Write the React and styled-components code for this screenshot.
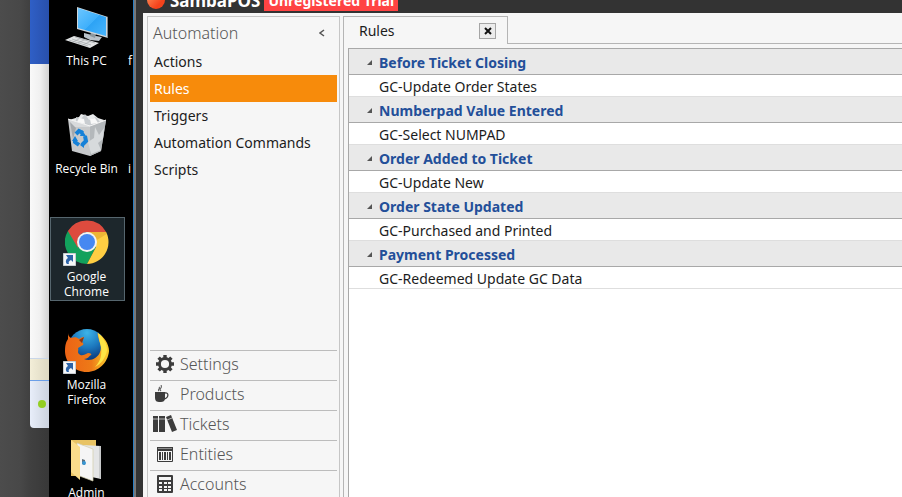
import React, { useState } from "react";
import styled, { createGlobalStyle } from "styled-components";

const menuItems = ["Actions", "Rules", "Triggers", "Automation Commands", "Scripts"];

const ruleGroups = [
  { name: "Before Ticket Closing", rules: ["GC-Update Order States"] },
  { name: "Numberpad Value Entered", rules: ["GC-Select NUMPAD"] },
  { name: "Order Added to Ticket", rules: ["GC-Update New"] },
  { name: "Order State Updated", rules: ["GC-Purchased and Printed"] },
  { name: "Payment Processed", rules: ["GC-Redeemed Update GC Data"] },
];

const ComputerIcon = () => (
  <svg width="44" height="44" viewBox="0 0 44 44">
    <defs>
      <linearGradient id="screen" x1="0" y1="0" x2="1" y2="1">
        <stop offset="0" stopColor="#6cc6ff" />
        <stop offset="0.5" stopColor="#3fb0fb" />
        <stop offset="0.52" stopColor="#2da3f5" />
        <stop offset="1" stopColor="#48b5fc" />
      </linearGradient>
    </defs>
    <path d="M19 29l12 3 6 1-3 4-9-1-6-3z" fill="#b9c2c9" />
    <path d="M26 28l5 2-1 4-5-2z" fill="#8d989f" />
    <path d="M12 3l31 10v21L12 25z" fill="#cfd6da" />
    <path d="M13 4l28 9v19L13 24z" fill="url(#screen)" />
    <path d="M42 13l1 0v21l-1 0z" fill="#7b858b" />
    <path d="M0 36l9-4 25 7-9 5z" fill="#e2e4e5" />
    <path d="M4 36l19 6M7 35l19 6M10 33l20 6M8 38l8-4M13 39l8-4M18 41l8-4" stroke="#9ba0a3" strokeWidth="0.6" />
  </svg>
);

const RecycleIcon = () => (
  <svg width="44" height="46" viewBox="0 0 44 46">
    <path d="M4 8l10-3 2-3 7 2 5-2 5 4 6 2-2 7H7z" fill="#e9ebec" />
    <path d="M11 5l5 2 4-5 4 6 7-3 4 5-8 4-16-3z" fill="#c8ccd0" />
    <path d="M14 6l5 1 1 5-8-2zM25 7l5-1 3 5-7 1z" fill="#f8f8f8" />
    <path d="M3 7l4 32 18 5 11-5 5-31-16 6z" fill="#d6d8da" fillOpacity="0.93" />
    <path d="M25 14L41 8l-5 31-11 5z" fill="#b4b8bb" />
    <path d="M30 15l4 8 5-7-1 11-5 4 3 7-10 4-3-12 6-4z" fill="#d7dadc" />
    <path d="M5 10l6 6-3 11z" fill="#a4a8ac" />
    <path d="M3 7l22 7 16-6" fill="none" stroke="#f4f4f4" />
    <g fill="none" stroke="#1681d8" strokeWidth="4">
      <path d="M11 22l3-3 4 2" />
      <path d="M20 24l1 5-4 4" />
      <path d="M14 33l-4-3v-3" />
    </g>
    <path d="M17 18l4 6-6 0zM19 36l-4-3 4-4zM7 29l3-5 3 5z" fill="#1681d8" />
  </svg>
);

const ChromeIcon = () => (
  <svg width="44" height="44" viewBox="0 0 44 44">
    <path d="M2.900 11A22 22 0 0 0 22 44l9-17-9-5z" fill="#12a15c" />
    <path d="M22 12h19.100A22 22 0 0 1 22 44l9-17z" fill="#ffce43" />
    <path d="M2.900 11A22 22 0 0 1 41.100 12H22c-5 0-9 4-9.500 9L13 28z" fill="#dd4b3e" />
    <path d="M24 12h17l.8 2-10 6z" fill="#d99a28" opacity="0.45" />
    <circle cx="22" cy="22" r="10" fill="#f3f3f3" />
    <circle cx="22" cy="22" r="8" fill="#4688f1" />
  </svg>
);

const FirefoxIcon = () => (
  <svg width="44" height="44" viewBox="0 0 44 44">
    <defs>
      <radialGradient id="globe" cx="0.5" cy="0.1" r="0.8">
        <stop offset="0" stopColor="#3db4e8" />
        <stop offset="0.5" stopColor="#1c77bd" />
        <stop offset="1" stopColor="#0a2a6b" />
      </radialGradient>
      <linearGradient id="fox" x1="0" y1="0" x2="1" y2="0">
        <stop offset="0" stopColor="#ec6315" />
        <stop offset="0.6" stopColor="#ee7a17" />
        <stop offset="1" stopColor="#fbd02f" />
      </linearGradient>
    </defs>
    <circle cx="22" cy="20" r="19" fill="url(#globe)" />
    <path
      d="M3 5c0 2 1 4 3 5 3-1 6-1 8 1 3-2 4-2 5-2l-2 5c1 1 2 2 1 3l-5 3c1 2-1 4 1 6 3 3 6 0 9-1 3 0 4 1 3 2-2 1-3 4-7 4 6 3 14-1 16-7 2-5 0-9-1-12-1-3-1-6-2-7 7 3 12 11 12 18-1 12-11 21-22 21C9 44 0 34 0 23c0-6 1-9 3-12z"
      fill="url(#fox)"
    />
    <path d="M33 5c5 4 9 10 9 17-1 8-6 14-12 17 6-6 7-13 6-20-1-4-2-8-3-14z" fill="#fee545" />
    <path d="M14 12l5-3-2 6z" fill="#8e3512" />
  </svg>
);

const FolderIcon = () => (
  <svg width="44" height="46" viewBox="0 -2 44 46">
    <path d="M6 2h25v36H6z" fill="#e8c364" />
    <path d="M18 7l18 1v33l-14-3z" fill="#e4e5e6" />
    <path d="M34 8l2 0v32l-2 0z" fill="#c7c9ca" />
    <path d="M12 5l16 6v32l-16-6z" fill="#f5f5f5" stroke="#d2cda9" strokeWidth="0.7" />
    <path d="M6 2l9 7v33l-9-8z" fill="#fbdd8b" />
    <path d="M17 21l3 1v5l-3-1z" fill="#5d6d79" />
    <circle cx="19" cy="25" r="2" fill="#3996d3" />
  </svg>
);

const ShortcutArrow = () => (
  <svg width="13" height="13" viewBox="0 0 13 13">
    <path d="M0 0h13v13H0z" fill="#f5f6f7" stroke="#9aa3aa" />
    <path d="M3 2h7v7L8 7c-2 1-3 2-2 4H4c-2-2-1-5 1-6z" fill="#2c63a8" />
  </svg>
);

const SettingsIcon = () => (
  <svg width="18" height="18" viewBox="0 0 18 18" stroke="#3c3c3c" fill="none">
    <circle cx="9" cy="9" r="5.500" strokeWidth="2.800" />
    <path
      d="M9 0v3M9 15v3M0 9h3M15 9h3M2.600 2.600l2.200 2.200M13.200 13.200l2.200 2.200M2.600 15.400l2.200-2.200M13.200 4.800l2.200-2.200"
      strokeWidth="3.400"
    />
  </svg>
);

const ProductsIcon = () => (
  <svg width="24" height="18" viewBox="0 0 24 18">
    <path d="M2 7h10v6c0 3-2 4-4 4H6c-2 0-4-1-4-4z" fill="#3c3c3c" />
    <path d="M12 8c4-1 4 5-1 6" fill="none" stroke="#3c3c3c" strokeWidth="1.300" />
    <path d="M6 6c-2-2 2-2 0-4M8 6c-3-3 2-2 0-6" fill="none" stroke="#666" strokeWidth="1.100" />
  </svg>
);

const TicketsIcon = () => (
  <svg width="24" height="18" viewBox="0 0 24 18">
    <path d="M0 1h5v16H0zM6 1h6v16H6zM13 2l5-2 6 15-5 2z" fill="#3c3c3c" />
    <path d="M0 4h5M6 4h6M14 5l5-2" stroke="#b5b5b5" strokeWidth="1" />
  </svg>
);

const EntitiesIcon = () => (
  <svg width="18" height="18" viewBox="0 0 18 18">
    <path d="M1.500 2.500h15v14h-15z" fill="#f5f5f5" stroke="#3c3c3c" />
    <path d="M1 2h16v4H1z" fill="#3c3c3c" />
    <path d="M2 3.500h14" stroke="#8a8a8a" />
    <path d="M3 7h2v8H3zM6 7h1v8H6zM8 7h2v8H8zM11 7h1v8h-1zM13 7h2v8h-2z" fill="#3c3c3c" />
  </svg>
);

const AccountsIcon = () => (
  <svg width="18" height="18" viewBox="0 0 18 18">
    <rect x="1" y="0" width="16" height="18" rx="1" fill="#3c3c3c" />
    <path d="M3 2h12v3H3z" fill="#f5f5f5" />
    <path d="M3 8h3M8 8h3M12 8h3M3 12h3M8 12h3M12 12h3M3 15h3M8 15h3M12 15h3" stroke="#f5f5f5" strokeWidth="2" />
  </svg>
);

const modules = [
  { name: "Settings", icon: <SettingsIcon /> },
  { name: "Products", icon: <ProductsIcon /> },
  { name: "Tickets", icon: <TicketsIcon /> },
  { name: "Entities", icon: <EntitiesIcon /> },
  { name: "Accounts", icon: <AccountsIcon /> },
];

const shortcuts = [
  { name: "This PC", icon: <ComputerIcon /> },
  { name: "Recycle Bin", icon: <RecycleIcon /> },
  { name: "Google Chrome", icon: <ChromeIcon />, linked: true, selected: true },
  { name: "Mozilla Firefox", icon: <FirefoxIcon />, linked: true },
  { name: "Admin", icon: <FolderIcon /> },
];

export default function App() {
  const [active, setActive] = useState("Rules");
  const [closed, setClosed] = useState([]);

  const toggle = (name) =>
    setClosed(closed.includes(name) ? closed.filter((n) => n !== name) : [...closed, name]);

  return (
    <>
      <GlobalStyle />
      <Screen>
        <Backdrop>
          <BackWindow>
            <BackTitle />
            <BackBody />
            <BackNotice />
            <BackStatus>
              <OnlineDot />
            </BackStatus>
          </BackWindow>
        </Backdrop>

        <Desktop>
          <IconColumn>
            {shortcuts.map((s) => (
              <Shortcut key={s.name} $selected={s.selected}>
                <Picture>
                  {s.icon}
                  {s.linked && (
                    <LinkBadge>
                      <ShortcutArrow />
                    </LinkBadge>
                  )}
                </Picture>
                {s.name}
              </Shortcut>
            ))}
          </IconColumn>
          <ClippedColumn>
            <ClippedLabel>f</ClippedLabel>
            <ClippedLabel>i</ClippedLabel>
          </ClippedColumn>
        </Desktop>

        <Window>
          <TitleBar>
            <Logo />
            <Brand>SambaPOS</Brand>
            <Trial>Unregistered Trial</Trial>
          </TitleBar>
          <Workspace>
            <Sidebar>
              <SidebarHead>
                <h2>Automation</h2>
                <CollapseButton aria-label="Collapse">
                  <svg width="6" height="8" viewBox="0 0 6 8">
                    <path d="M5 1L1 4l4 3" fill="none" stroke="#555" strokeWidth="1.500" />
                  </svg>
                </CollapseButton>
              </SidebarHead>
              <Menu>
                {menuItems.map((item) => (
                  <MenuItem key={item} $active={item === active} onClick={() => setActive(item)}>
                    {item}
                  </MenuItem>
                ))}
              </Menu>
              <Modules>
                {modules.map((m) => (
                  <ModuleButton key={m.name}>
                    <ModuleIcon>{m.icon}</ModuleIcon>
                    {m.name}
                  </ModuleButton>
                ))}
              </Modules>
            </Sidebar>

            <Content>
              <TabStrip>
                <Tab>
                  Rules
                  <CloseButton aria-label="Close tab">
                    <svg width="8" height="8" viewBox="0 0 8 8">
                      <path d="M1 1l6 6M7 1L1 7" stroke="#111" strokeWidth="2" />
                    </svg>
                  </CloseButton>
                </Tab>
                <TabRest />
              </TabStrip>
              <Page>
                <RuleList>
                  {ruleGroups.map((group) => (
                    <section key={group.name}>
                      <GroupHead onClick={() => toggle(group.name)}>
                        <svg width="5" height="5" viewBox="0 0 6 6">
                          <path d="M6 0v6H0z" fill="#555" />
                        </svg>
                        {group.name}
                      </GroupHead>
                      {!closed.includes(group.name) &&
                        group.rules.map((rule) => <Rule key={rule}>{rule}</Rule>)}
                    </section>
                  ))}
                </RuleList>
              </Page>
            </Content>
          </Workspace>
        </Window>
      </Screen>
    </>
  );
}

const GlobalStyle = createGlobalStyle`
  * {
    box-sizing: border-box;
  }
  body {
    margin: 0;
    overflow: hidden;
    font-family: "Noto Sans", "Open Sans", sans-serif;
    font-size: 14px;
    color: #1c1c1c;
  }
  button {
    font: inherit;
    color: inherit;
    border: 0;
    padding: 0;
    background: none;
    text-align: left;
  }
  svg {
    display: block;
    flex-shrink: 0;
  }
`;

const Screen = styled.div`
  display: grid;
  grid-template-columns: 49px 84px 1fr;
  height: 100vh;
  overflow: hidden;
`;

const Backdrop = styled.div`
  padding-left: 30px;
  background: linear-gradient(to right, #4c4c4c, #484848 20px, #404040 30px, #383838);
`;

const BackWindow = styled.div`
  height: 428px;
  display: flex;
  flex-direction: column;
  border-bottom-left-radius: 4px;
  overflow: hidden;
`;

const BackTitle = styled.div`
  height: 64px;
  background: linear-gradient(to right, #2f5fc6, #2850ac);
`;

const BackBody = styled.div`
  flex: 1;
  background: linear-gradient(to right, #f9f9f9, #f0f0f0 10px, #d2d2d2);
`;

const BackNotice = styled.div`
  height: 23px;
  border-top: 1px solid #c9d6e8;
  border-bottom: 1px solid #6b9fe8;
  background: linear-gradient(to right, #f3eed8, #ddd8c2);
`;

const BackStatus = styled.div`
  height: 47px;
  padding: 19px 0 0 8px;
  background: linear-gradient(to right, #e8eefa, #ccd3de);
`;

const OnlineDot = styled.div`
  width: 8px;
  height: 8px;
  border-radius: 50%;
  background: #93cf22;
`;

const Desktop = styled.div`
  display: flex;
  padding: 1px 0 0 1px;
  background: #000;
  color: #fff;
  font-family: "Open Sans", "Noto Sans", sans-serif;
  font-size: 12px;
  line-height: 15px;
  overflow: hidden;
`;

const IconColumn = styled.div`
  width: 75px;
  flex-shrink: 0;
  display: flex;
  flex-direction: column;
  gap: 24px;
`;

const Shortcut = styled.button`
  && {
    text-align: center;
  }
  height: 84px;
  flex-shrink: 0;
  display: flex;
  flex-direction: column;
  align-items: center;
  padding: 0 11px 0 9px;
  border: 1px solid ${(props) => (props.$selected ? "#56666e" : "transparent")};
  background: ${(props) => (props.$selected ? "#1d272c" : "transparent")};
  &:nth-child(2) {
    white-space: nowrap;
  }
`;

const Picture = styled.span`
  position: relative;
  height: 48px;
  margin-bottom: 3px;
  padding-top: 2px;
`;

const LinkBadge = styled.span`
  position: absolute;
  left: -2px;
  bottom: 0;
`;

const ClippedColumn = styled.div`
  display: flex;
  flex-direction: column;
  gap: 93px;
  padding: 52px 0 0 3px;
`;

const ClippedLabel = styled.span`
  height: 15px;
`;

const Window = styled.div`
  display: flex;
  flex-direction: column;
  min-width: 0;
  padding-left: 9px;
  border-left: 1px solid #2a7ec4;
  background: linear-gradient(to right, #777 2px, #333 2px);
`;

const TitleBar = styled.header`
  height: 13px;
  flex-shrink: 0;
  display: flex;
  align-items: flex-end;
  padding: 0 0 2px 4px;
  background: #333;
  color: #fff;
  font-weight: 700;
  overflow: hidden;
`;

const Logo = styled.span`
  width: 18px;
  height: 18px;
  margin-bottom: 2px;
  border-radius: 50%;
  background: linear-gradient(135deg, #ff9a62, #f4431c 70%);
`;

const Brand = styled.span`
  margin-left: 5px;
  font-size: 17px;
  line-height: 20px;
`;

const Trial = styled.span`
  margin-left: 4px;
  padding: 0 4px;
  font-size: 14px;
  line-height: 20px;
  background: #ff4343;
`;

const Workspace = styled.div`
  flex: 1;
  min-height: 0;
  display: flex;
  gap: 3px;
  padding: 3px 0 0 4px;
  background: #f6f6f6;
`;

const Sidebar = styled.aside`
  width: 193px;
  flex-shrink: 0;
  display: flex;
  flex-direction: column;
  padding: 0 2px;
  border: 1px solid #c6c6c6;
  border-bottom: 0;
`;

const SidebarHead = styled.div`
  height: 31px;
  flex-shrink: 0;
  display: flex;
  align-items: center;
  justify-content: space-between;
  padding: 0 12px 0 3px;
  h2 {
    margin: 0;
    font-size: 16px;
    font-weight: 300;
    color: #555;
  }
`;

const CollapseButton = styled.button`
  height: 10px;
`;

const Menu = styled.nav`
  flex: 1;
  display: flex;
  flex-direction: column;
`;

const MenuItem = styled.button`
  height: 27px;
  && {
    padding: 0 4px;
    color: ${(props) => (props.$active ? "#fff" : "#1c1c1c")};
    background: ${(props) => (props.$active ? "#f78b0b" : "transparent")};
  }
`;

const Modules = styled.nav`
  flex-shrink: 0;
  height: 147px;
`;

const ModuleButton = styled.button`
  width: 100%;
  height: 30px;
  display: flex;
  align-items: center;
  gap: 3px;
  && {
    padding: 0 3px 3px;
    border-top: 1px solid #bcbcbc;
    font-size: 16px;
    font-weight: 300;
    color: #555;
  }
`;

const ModuleIcon = styled.span`
  width: 24px;
  display: flex;
  justify-content: center;
`;

const Content = styled.main`
  flex: 1;
  min-width: 0;
  display: flex;
  flex-direction: column;
`;

const TabStrip = styled.div`
  height: 28px;
  flex-shrink: 0;
  display: flex;
`;

const Tab = styled.div`
  width: 165px;
  display: flex;
  align-items: center;
  justify-content: space-between;
  padding: 0 11px 0 15px;
  border: 1px solid #b5b5b5;
  border-bottom: 0;
`;

const TabRest = styled.div`
  flex: 1;
  border-bottom: 1px solid #b5b5b5;
`;

const CloseButton = styled.button`
  && {
    width: 17px;
    height: 16px;
    display: flex;
    align-items: center;
    justify-content: center;
    border: 1px solid #a5a5a5;
    background: #ececec;
  }
`;

const Page = styled.div`
  flex: 1;
  min-height: 0;
  display: flex;
  padding: 4px 0 0 4px;
  border-left: 1px solid #b5b5b5;
`;

const RuleList = styled.div`
  flex: 1;
  border: 1px solid #a8a8a8;
  border-width: 1px 0 0 1px;
  background: #fff;
`;

const GroupHead = styled.button`
  width: 100%;
  height: 26px;
  display: flex;
  align-items: center;
  gap: 7px;
  && {
    padding: 2px 0 0 18px;
    border-bottom: 1px solid #a8a8a8;
    background: #e9e9e9;
    color: #234f99;
    font-weight: 700;
  }
`;

const Rule = styled.div`
  height: 22px;
  padding-left: 30px;
  line-height: 24px;
  border-bottom: 1px solid #dedede;
`;
